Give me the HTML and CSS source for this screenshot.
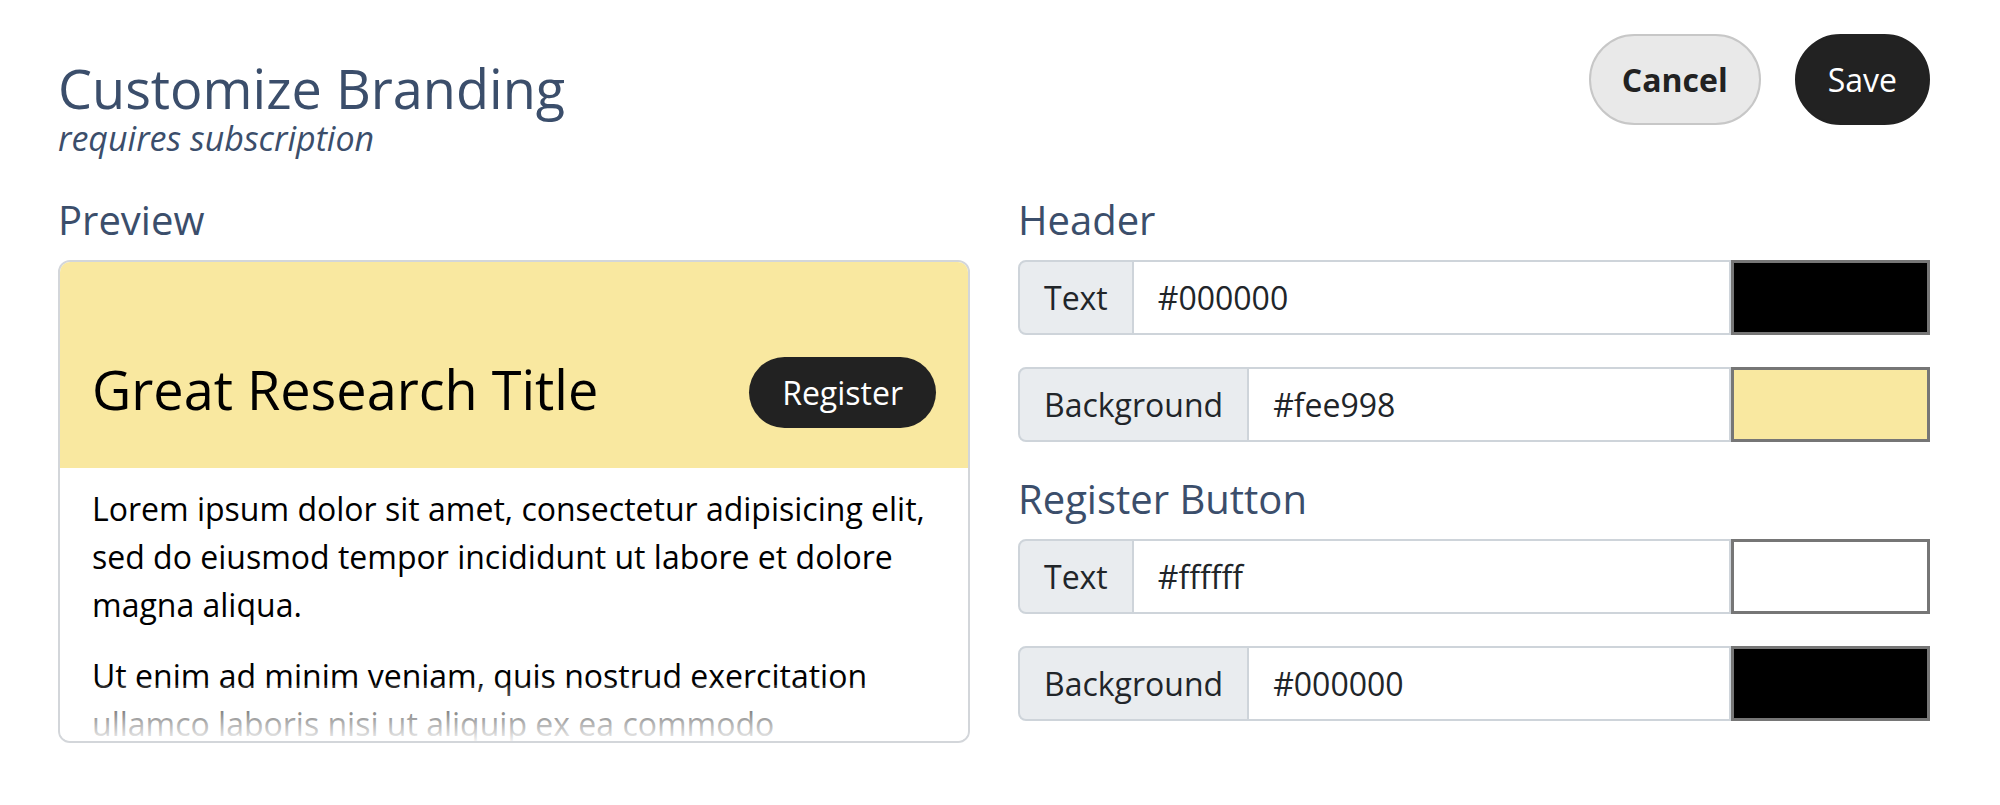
FILE: index.html
```html
<!DOCTYPE html>
<html lang="en">
<head>
<meta charset="utf-8">
<title>Customize Branding</title>
<link rel="stylesheet" href="styles.css">
</head>
<body>
<div class="page">
  <header class="topbar">
    <div class="heading">
      <h1 class="title">Customize Branding</h1>
      <div class="subtitle">requires subscription</div>
    </div>
    <div class="actions">
      <button class="btn btn-cancel">Cancel</button>
      <button class="btn btn-save">Save</button>
    </div>
  </header>

  <main class="columns">
    <section class="preview-col">
      <h2 class="section-label">Preview</h2>
      <div class="card">
        <div class="card-head">
          <div class="card-title">Great Research Title</div>
          <button class="register">Register</button>
        </div>
        <div class="card-body">
          <p>Lorem ipsum dolor sit amet, consectetur adipisicing elit, sed do eiusmod tempor incididunt ut labore et dolore magna aliqua.</p>
          <p>Ut enim ad minim veniam, quis nostrud exercitation ullamco laboris nisi ut aliquip ex ea commodo consequat.</p>
          <div class="fade"></div>
        </div>
      </div>
    </section>

    <section class="settings-col">
      <div class="group">
        <h2 class="section-label">Header</h2>
        <div class="field">
          <span class="addon">Text</span>
          <span class="value">#000000</span>
          <span class="swatch swatch-black"></span>
        </div>
        <div class="field">
          <span class="addon">Background</span>
          <span class="value">#fee998</span>
          <span class="swatch swatch-yellow"></span>
        </div>
      </div>
      <div class="group">
        <h2 class="section-label">Register Button</h2>
        <div class="field">
          <span class="addon">Text</span>
          <span class="value">#ffffff</span>
          <span class="swatch swatch-white"></span>
        </div>
        <div class="field">
          <span class="addon">Background</span>
          <span class="value">#000000</span>
          <span class="swatch swatch-black"></span>
        </div>
      </div>
    </section>
  </main>
</div>
</body>
</html>
```

FILE: styles.css
```css
* { box-sizing: border-box; }

body {
  margin: 0;
  background: #ffffff;
  font-family: "Open Sans", "Noto Sans", sans-serif;
  color: #222222;
}

.page {
  padding: 34px 70px 0 58px;
}

.topbar {
  display: flex;
  justify-content: space-between;
  align-items: flex-start;
}

.heading {
  padding-top: 26px;
}

.title {
  margin: 0;
  font-size: 54px;
  line-height: 56px;
  font-weight: 400;
  color: #3b4e6b;
}

.subtitle {
  margin-top: 5px;
  font-size: 34px;
  line-height: 34px;
  font-style: italic;
  color: #3b4e6b;
}

.actions {
  display: flex;
  gap: 34px;
}

.btn {
  height: 91px;
  padding: 0 31px;
  border-radius: 46px;
  font-family: inherit;
  font-size: 32px;
  line-height: 48px;
}

.btn-cancel {
  background: #e9e9e9;
  border: 2px solid #c7c7c7;
  color: #222222;
  font-weight: 700;
}

.btn-save {
  background: #222222;
  border: 2px solid #222222;
  color: #ffffff;
  font-weight: 400;
}

.columns {
  display: grid;
  grid-template-columns: 1fr 1fr;
  column-gap: 48px;
  margin-top: 41px;
}

.section-label {
  margin: 0 0 16px;
  font-size: 40px;
  line-height: 48px;
  font-weight: 400;
  color: #3b4e6b;
}

.card {
  height: 483px;
  border: 2px solid #d3d6da;
  border-radius: 12px;
  overflow: hidden;
  display: flex;
  flex-direction: column;
}

.card-head {
  flex: none;
  height: 206px;
  background: #f9e8a0;
  padding: 95px 32px 40px;
  display: flex;
  align-items: center;
  justify-content: space-between;
}

.card-title {
  font-size: 54px;
  line-height: 64px;
  color: #000000;
  margin-bottom: 8px;
}

.register {
  height: 71px;
  padding: 0 33px;
  border: none;
  border-radius: 36px;
  background: #222222;
  color: #ffffff;
  font-family: inherit;
  font-size: 32px;
  line-height: 71px;
}

.card-body {
  position: relative;
  flex: 1;
  overflow: hidden;
  padding: 17px 32px 0;
  color: #000000;
  font-size: 32px;
  line-height: 48px;
}

.card-body p {
  margin: 0 0 23px;
}

.fade {
  position: absolute;
  left: 0;
  right: 0;
  bottom: 0;
  height: 56px;
  background: linear-gradient(to bottom, rgba(255, 255, 255, 0.15), rgba(255, 255, 255, 0.95));
}

.settings-col {
  display: flex;
  flex-direction: column;
  gap: 33px;
}

.group {
  display: flex;
  flex-direction: column;
}

.field {
  display: flex;
  height: 75px;
  margin-bottom: 32px;
  font-size: 32px;
}

.field:last-child {
  margin-bottom: 0;
}

.addon {
  display: flex;
  align-items: center;
  padding: 0 24px;
  background: #e9ecef;
  border: 2px solid #ced4da;
  border-radius: 8px 0 0 8px;
  color: #212529;
}

.value {
  flex: 1;
  display: flex;
  align-items: center;
  padding: 0 24px;
  background: #ffffff;
  border: 2px solid #ced4da;
  border-left: none;
  color: #212529;
}

.swatch {
  width: 199px;
  flex: none;
  border: 3px solid #767676;
}

.swatch-black { background: #000000; }
.swatch-yellow { background: #f9e8a0; }
.swatch-white { background: #ffffff; }
```
